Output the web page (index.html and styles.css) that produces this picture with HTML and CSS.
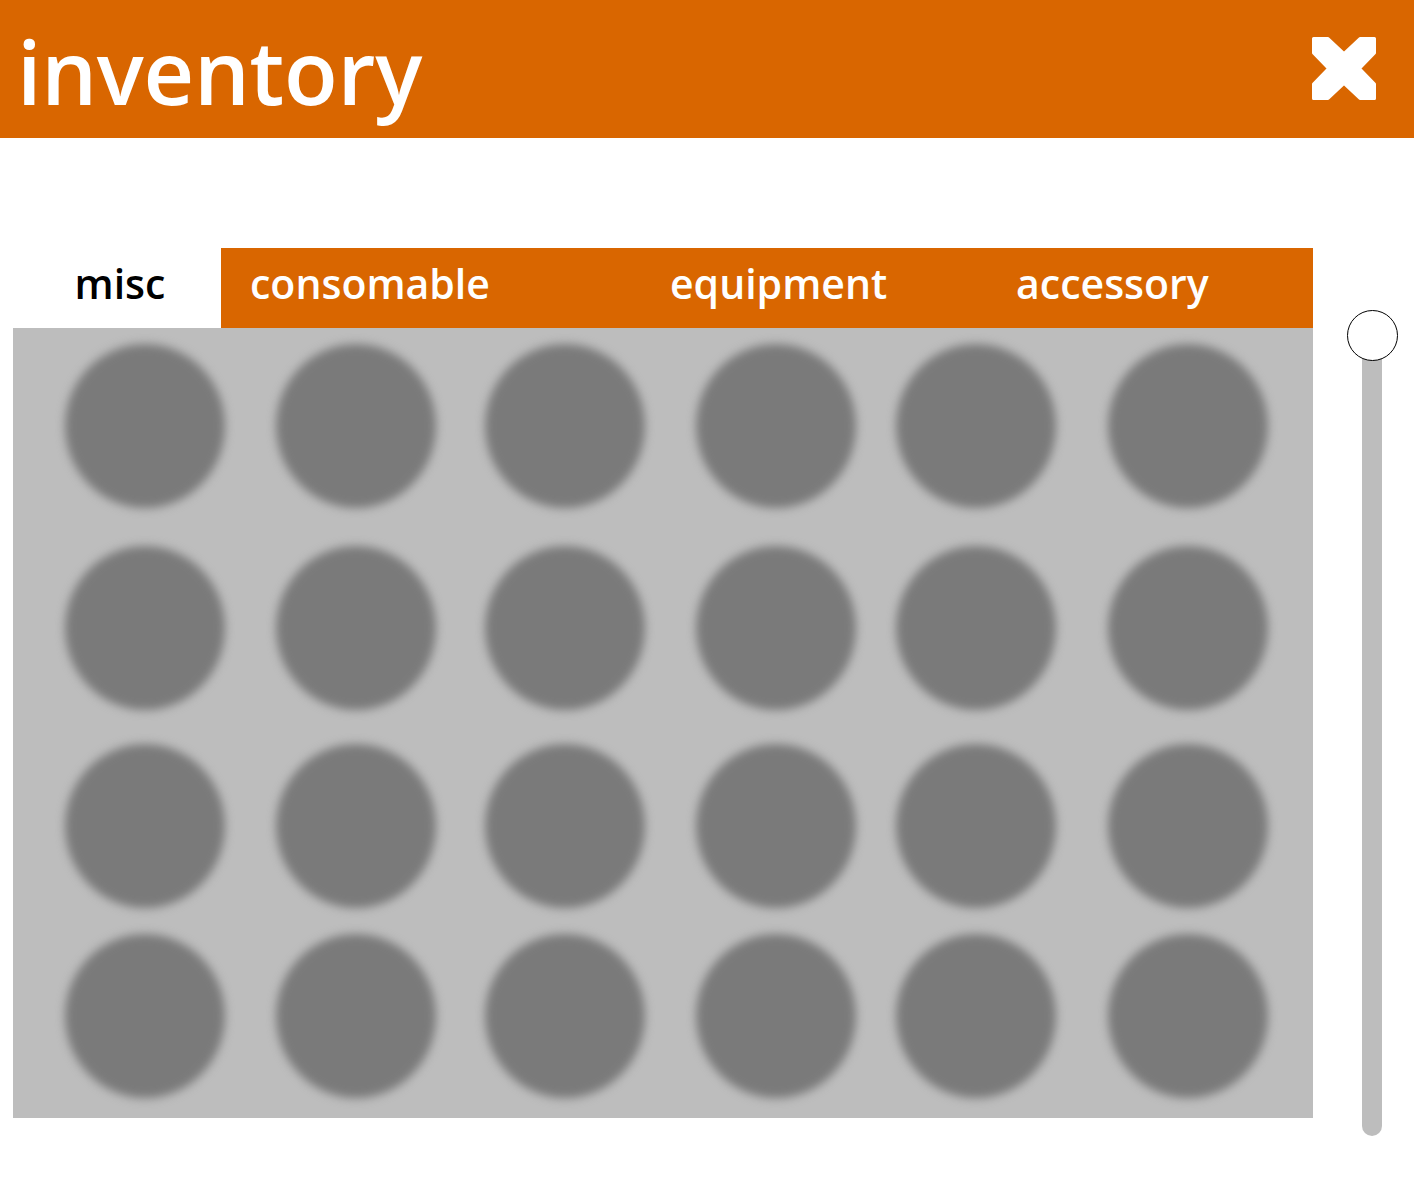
FILE: index.html
```html
<!DOCTYPE html>
<html>
<head>
<meta charset="utf-8">
<link rel="stylesheet" href="styles.css">
</head>
<body>
<header class="topbar">
  <h1 class="title">inventory</h1>
  <button class="close" aria-label="close">
    <svg width="64" height="63" viewBox="0 0 64 63">
      <polygon points="1.5,1.5 16,1.5 32,16.5 48,1.5 62.5,1.5 62.5,16 47.5,31.5 62.5,47 62.5,61.5 48,61.5 32,46.5 16,61.5 1.5,61.5 1.5,47 16.5,31.5 1.5,16" fill="#fff" stroke="#fff" stroke-width="3" stroke-linejoin="round"/>
    </svg>
  </button>
</header>
<main class="content">
  <section class="inventory">
    <nav class="tabs">
      <div class="tab tab-misc active">misc</div>
      <div class="tab tab-cons">consomable</div>
      <div class="tab tab-equip">equipment</div>
      <div class="tab tab-acc">accessory</div>
    </nav>
    <div class="grid">
      <div class="slot"></div><div class="slot"></div><div class="slot"></div><div class="slot"></div><div class="slot"></div><div class="slot"></div>
      <div class="slot"></div><div class="slot"></div><div class="slot"></div><div class="slot"></div><div class="slot"></div><div class="slot"></div>
      <div class="slot"></div><div class="slot"></div><div class="slot"></div><div class="slot"></div><div class="slot"></div><div class="slot"></div>
      <div class="slot"></div><div class="slot"></div><div class="slot"></div><div class="slot"></div><div class="slot"></div><div class="slot"></div>
    </div>
  </section>
  <div class="scroll">
    <div class="track"></div>
    <div class="thumb"></div>
  </div>
</main>
</body>
</html>
```
FILE: styles.css
```css
* { box-sizing: border-box; }
html, body { margin: 0; padding: 0; background: #fff; }
body {
  width: 1414px;
  height: 1180px;
  overflow: hidden;
  font-family: "Open Sans", "Noto Sans", sans-serif;
}
.topbar {
  height: 138px;
  background: #d96600;
  display: flex;
  justify-content: space-between;
  align-items: flex-start;
  padding: 0 38px 0 17px;
}
.title {
  margin: 0;
  color: #fff;
  font-size: 88px;
  font-weight: 600;
  line-height: 1;
  padding-top: 27px;
  letter-spacing: -0.3px;
}
.close {
  background: none;
  border: 0;
  padding: 0;
  margin-top: 37px;
  width: 64px;
  height: 63px;
  display: block;
}
.close svg { display: block; }
.content {
  display: flex;
  align-items: flex-start;
  padding: 110px 0 0 13px;
}
.inventory {
  width: 1300px;
  display: flex;
  flex-direction: column;
}
.tabs {
  display: flex;
  height: 80px;
  background: #d96600;
}
.tab {
  color: #fff;
  font-size: 41px;
  font-weight: 600;
  line-height: 70px;
  height: 80px;
  white-space: nowrap;
}
.tab-misc {
  background: #fff;
  color: #000;
  width: 208px;
  text-align: center;
  padding-left: 6px;
}
.tab-cons { padding-left: 29px; width: 449px; }
.tab-equip { width: 346px; }
.grid {
  height: 790px;
  background: #bdbdbd;
  display: grid;
  grid-template-columns: 211px 209px 211px 200px 212px 208px;
  grid-template-rows: 202px 198px 190px 160px;
  padding: 16px 0 0 52px;
  overflow: hidden;
}
.slot {
  width: 160px;
  height: 164px;
  border-radius: 50%;
  background: #7a7a7a;
  filter: blur(5px);
}
.scroll {
  position: relative;
  margin-left: 34px;
  margin-top: 62px;
  width: 51px;
  height: 826px;
}
.track {
  position: absolute;
  left: 15px;
  top: 25px;
  width: 20px;
  height: 801px;
  background: #bdbdbd;
  border-radius: 0 0 10px 10px;
}
.thumb {
  position: absolute;
  left: 0;
  top: 0;
  width: 51px;
  height: 51px;
  border-radius: 50%;
  background: #fff;
  border: 1.5px solid #000;
}
```
